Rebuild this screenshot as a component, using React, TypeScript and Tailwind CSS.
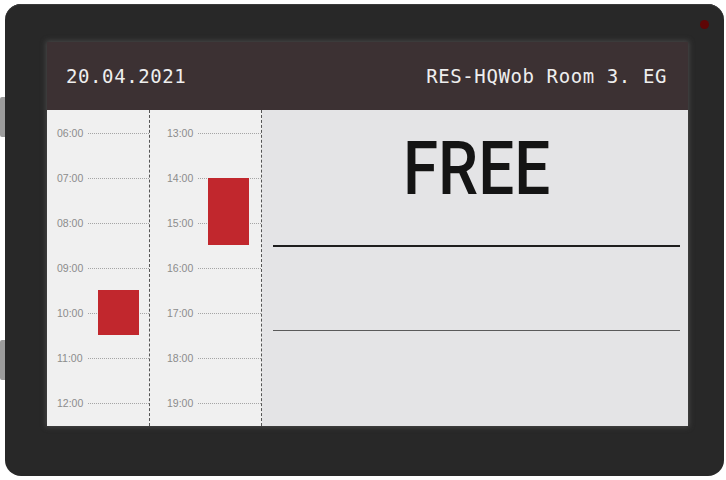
import React from 'react';

type Slot = { label: string };
type Booking = { top: number; height: number };

const morning: Slot[] = ['06:00', '07:00', '08:00', '09:00', '10:00', '11:00', '12:00'].map((label) => ({ label }));
const afternoon: Slot[] = ['13:00', '14:00', '15:00', '16:00', '17:00', '18:00', '19:00'].map((label) => ({ label }));

// 45px per hour, rows start at the top of the column
const ROW = 45;

const TimeColumn: React.FC<{ slots: Slot[]; bookings: Booking[]; width: string; labelPad: string; blockLeft: string }> = ({
    slots,
    bookings,
    width,
    labelPad,
    blockLeft,
}) => (
    <div className={`relative h-full shrink-0 border-r border-dashed border-[#555] ${width}`}>
        {slots.map((s) => (
            <div key={s.label} className={`flex h-[45px] items-center pt-[1px] ${labelPad}`}>
                <span className="w-[31px] shrink-0 text-[10.5px] leading-none text-[#8c8c8c]">{s.label}</span>
                <div className="flex-1 border-t border-dotted border-[#a5a5a5]" />
            </div>
        ))}
        {bookings.map((b, i) => (
            <div
                key={i}
                className={`absolute w-[41px] bg-[#c1272d] ${blockLeft}`}
                style={{ top: b.top * ROW + ROW / 2, height: b.height * ROW }}
            />
        ))}
    </div>
);

const App: React.FC = () => {
    return (
        <div className="relative h-[480px] w-[726px] overflow-hidden bg-white" style={{ fontFamily: '"Liberation Sans", Arial, sans-serif' }}>
            {/* side buttons */}
            <div className="absolute left-0 top-[97px] h-[40px] w-[8px] rounded-l-[2px] bg-[#9c9c9c]" />
            <div className="absolute left-0 top-[340px] h-[40px] w-[8px] rounded-l-[2px] bg-[#9c9c9c]" />

            {/* device bezel */}
            <div className="relative ml-[5px] mt-[4px] h-[472px] w-[719px] rounded-[16px] bg-[#282828] pl-[42px] pt-[38px] shadow-[inset_0_1px_0_#3a3a3a]">
                <div className="absolute right-[15px] top-[16px] h-[9px] w-[9px] rounded-full bg-[#5e0606]" />

                {/* screen */}
                <div className="flex h-[384px] w-[641px] flex-col shadow-[0_0_5px_1px_#4a4a4a]">
                    <div className="flex h-[68px] items-center justify-between bg-[#3c3133] pl-[19px] pr-[21px] text-[19px] tracking-[0.6px] text-[#eeeeee]" style={{ fontFamily: '"DejaVu Sans Mono", monospace' }}>
                        <span>20.04.2021</span>
                        <span>RES-HQWob Room 3. EG</span>
                    </div>

                    <div className="flex flex-1 bg-[#f0f0f0]">
                        <TimeColumn
                            slots={morning}
                            bookings={[{ top: 3.5, height: 1 }]}
                            width="w-[103px]"
                            labelPad="pl-[10px]"
                            blockLeft="left-[51px]"
                        />
                        <TimeColumn
                            slots={afternoon}
                            bookings={[{ top: 1, height: 1.5 }]}
                            width="w-[112px]"
                            labelPad="pl-[17px]"
                            blockLeft="left-[58px]"
                        />

                        <div className="flex flex-1 flex-col bg-[#e4e4e6] pl-[11px] pr-[8px]">
                            <div className="flex h-[137px] items-center justify-center border-b-2 border-[#1e1e1e] pb-[18px]">
                                <span className="inline-block scale-x-[0.85] text-[75px] font-medium leading-none text-[#141414]" style={{ fontFamily: 'Roboto, sans-serif' }}>
                                    FREE
                                </span>
                            </div>
                            <div className="h-[84px] border-b-[1.5px] border-[#5a5a5a]" />
                        </div>
                    </div>
                </div>
            </div>
        </div>
    );
};

export default App;
